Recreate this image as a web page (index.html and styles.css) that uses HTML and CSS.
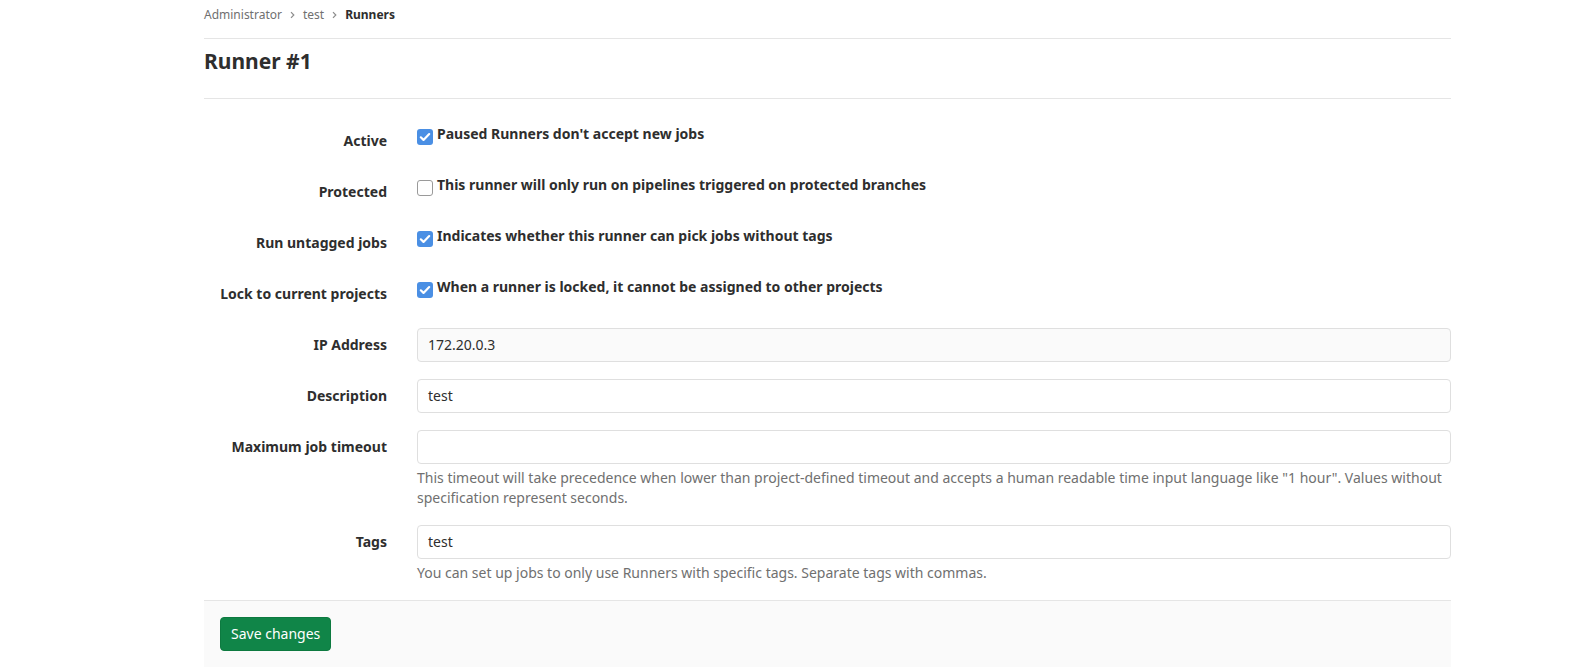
FILE: index.html
```html
<!DOCTYPE html>
<html lang="en">
<head>
<meta charset="utf-8">
<title>Runner #1</title>
<link rel="stylesheet" href="styles.css">
</head>
<body>
<div class="page">
  <nav class="breadcrumbs">
    <a class="crumb" href="#">Administrator</a>
    <svg class="chev" width="5" height="8" viewBox="0 0 5 8"><path d="M1 1.2l2.8 2.8L1 6.8" fill="none" stroke="#8c8c8c" stroke-width="1.2"/></svg>
    <a class="crumb" href="#">test</a>
    <svg class="chev" width="5" height="8" viewBox="0 0 5 8"><path d="M1 1.2l2.8 2.8L1 6.8" fill="none" stroke="#8c8c8c" stroke-width="1.2"/></svg>
    <span class="crumb current">Runners</span>
  </nav>

  <div class="title-bar">
    <h3 class="page-title">Runner #1</h3>
  </div>

  <form class="runner-form">
    <div class="fields">
      <div class="form-group">
        <div class="label">Active</div>
        <div class="control">
          <label class="check">
            <span class="box checked"><svg width="16" height="16" viewBox="0 0 16 16"><path d="M3.8 8.3l2.7 2.6 5.7-5.8" fill="none" stroke="#fff" stroke-width="2.2" stroke-linecap="round" stroke-linejoin="round"/></svg></span>
            <span>Paused Runners don't accept new jobs</span>
          </label>
        </div>
      </div>
      <div class="form-group">
        <div class="label">Protected</div>
        <div class="control">
          <label class="check">
            <span class="box"></span>
            <span>This runner will only run on pipelines triggered on protected branches</span>
          </label>
        </div>
      </div>
      <div class="form-group">
        <div class="label">Run untagged jobs</div>
        <div class="control">
          <label class="check">
            <span class="box checked"><svg width="16" height="16" viewBox="0 0 16 16"><path d="M3.8 8.3l2.7 2.6 5.7-5.8" fill="none" stroke="#fff" stroke-width="2.2" stroke-linecap="round" stroke-linejoin="round"/></svg></span>
            <span>Indicates whether this runner can pick jobs without tags</span>
          </label>
        </div>
      </div>
      <div class="form-group">
        <div class="label">Lock to current projects</div>
        <div class="control">
          <label class="check">
            <span class="box checked"><svg width="16" height="16" viewBox="0 0 16 16"><path d="M3.8 8.3l2.7 2.6 5.7-5.8" fill="none" stroke="#fff" stroke-width="2.2" stroke-linecap="round" stroke-linejoin="round"/></svg></span>
            <span>When a runner is locked, it cannot be assigned to other projects</span>
          </label>
        </div>
      </div>
      <div class="form-group">
        <div class="label">IP Address</div>
        <div class="control">
          <div class="input readonly">172.20.0.3</div>
        </div>
      </div>
      <div class="form-group">
        <div class="label">Description</div>
        <div class="control">
          <div class="input">test</div>
        </div>
      </div>
      <div class="form-group">
        <div class="label">Maximum job timeout</div>
        <div class="control">
          <div class="input"></div>
          <p class="help">This timeout will take precedence when lower than project-defined timeout and accepts a human readable time input language like "1 hour". Values without specification represent seconds.</p>
        </div>
      </div>
      <div class="form-group last">
        <div class="label">Tags</div>
        <div class="control">
          <div class="input">test</div>
          <p class="help">You can set up jobs to only use Runners with specific tags. Separate tags with commas.</p>
        </div>
      </div>
    </div>
    <div class="form-actions">
      <button type="button" class="btn-save">Save changes</button>
    </div>
  </form>
</div>
</body>
</html>
```

FILE: styles.css
```css
* { box-sizing: border-box; }

html, body {
  margin: 0;
  padding: 0;
  background: #fff;
}

body {
  font-family: "Noto Sans", "Open Sans", "Liberation Sans", sans-serif;
  font-size: 14px;
  line-height: 20px;
  color: #2e2e2e;
}

.page {
  margin-left: 204px;
  width: 1247px;
}

.breadcrumbs {
  display: flex;
  align-items: center;
  gap: 8px;
  height: 39px;
  padding-top: 7px;
  padding-bottom: 16px;
  border-bottom: 1px solid #e5e5e5;
  font-size: 12px;
  line-height: 16px;
}

.crumb {
  color: #707070;
  text-decoration: none;
}

.crumb.current {
  color: #2e2e2e;
  font-weight: 700;
}

.chev { display: block; }

.title-bar {
  padding-top: 10px;
  height: 60px;
  border-bottom: 1px solid #e5e5e5;
}

.page-title {
  margin: 0;
  font-size: 21px;
  line-height: 25px;
  font-weight: 700;
  color: #2e2e2e;
}

.runner-form { margin: 0; }

.fields {
  padding-top: 25px;
  padding-bottom: 17px;
}

.form-group {
  display: grid;
  grid-template-columns: 183px 1fr;
  column-gap: 30px;
  margin-bottom: 17px;
  min-height: 34px;
}

.form-group.last { margin-bottom: 0; }

.label {
  text-align: right;
  font-weight: 700;
  padding-top: 7px;
  line-height: 20px;
}

.control { min-width: 0; }

.check {
  display: flex;
  align-items: flex-start;
  gap: 4px;
  font-weight: 700;
  line-height: 20px;
}

.box {
  flex: none;
  width: 16px;
  height: 16px;
  margin-top: 5px;
  border-radius: 3px;
  border: 1px solid #9a9a9a;
  background: #fff;
  display: block;
}

.box svg { display: block; }

.box.checked {
  border: none;
  background: #4a8fe4;
}

.input {
  height: 34px;
  border: 1px solid #dfdfdf;
  border-radius: 4px;
  padding: 6px 10px;
  line-height: 20px;
  background: #fff;
  color: #2e2e2e;
}

.input.readonly { background: #fafafa; }

.help {
  margin: 4px 0 0;
  color: #707070;
  line-height: 20px;
}

.form-actions {
  border-top: 1px solid #e5e5e5;
  background: #fafafa;
  padding: 16px;
  min-height: 67px;
}

.btn-save {
  height: 34px;
  padding: 0 10px;
  border: 1px solid #0d7a40;
  border-radius: 4px;
  background: #108548;
  color: #fff;
  font-family: inherit;
  font-size: 14px;
  line-height: 20px;
}
```
